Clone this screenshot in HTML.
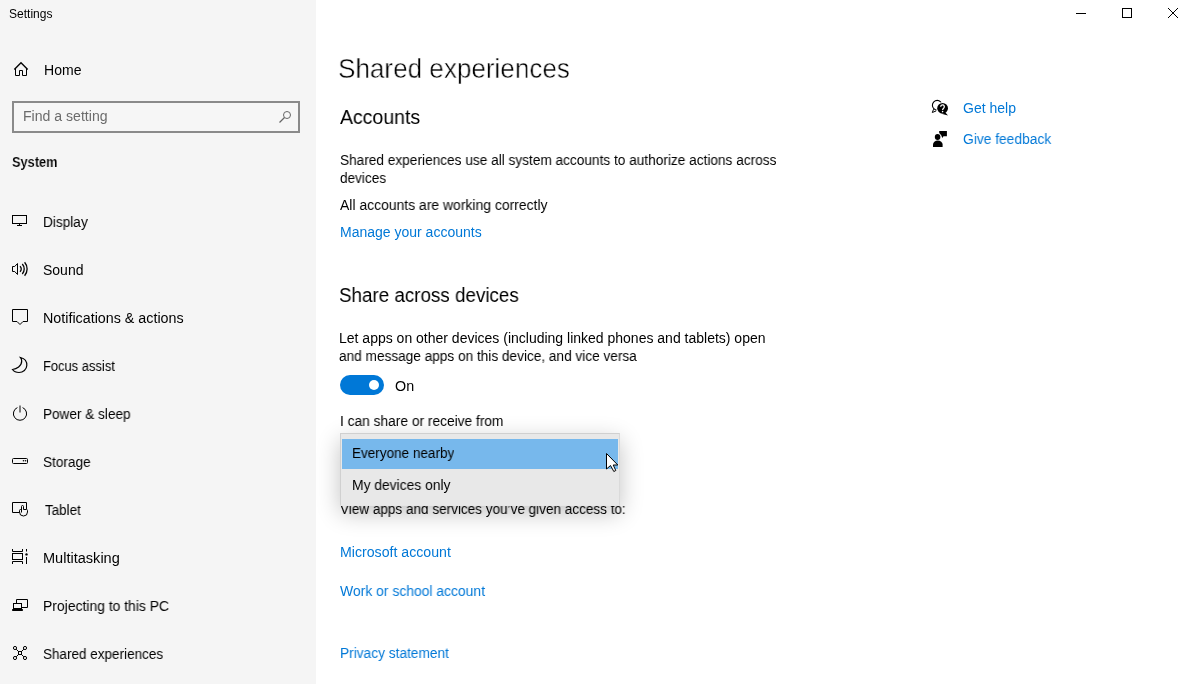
<!DOCTYPE html>
<html>
<head>
<meta charset="utf-8">
<style>
html,body{margin:0;padding:0;}
body{width:1187px;height:684px;overflow:hidden;position:relative;background:#fff;font-family:"Liberation Sans",sans-serif;}
.t{position:absolute;white-space:pre;will-change:transform;}
#side{position:absolute;left:0;top:0;width:316px;height:684px;background:#f5f5f5;}
#search{position:absolute;left:12px;top:101px;width:284px;height:28px;border:2px solid #8a8a8a;background:#f6f6f6;}
#toggle{position:absolute;left:340px;top:375px;width:44px;height:20px;border-radius:10px;background:#0078d7;}
#knob{position:absolute;left:29px;top:5px;width:10px;height:10px;border-radius:5px;background:#fff;}
#popup{position:absolute;left:340px;top:433px;width:278px;height:71px;border:1px solid #d0d0d0;border-bottom-color:#e6e6e6;border-right-color:#dadada;background:#e8e8e8;box-shadow:0 7px 22px rgba(0,0,0,0.24);}
#hl{position:absolute;left:342px;top:439px;width:276px;height:30px;background:#77b8ec;}
svg{position:absolute;left:0;top:0;}
</style>
</head>
<body>
<div id="side"></div>
<div id="search"></div>
<div class="t" style="left:9.10px;top:5px;font-size:12px;line-height:18px;font-weight:400;color:#000;transform:scaleX(1.0024);transform-origin:0 0;">Settings</div>
<div class="t" style="left:43.70px;top:60px;font-size:14px;line-height:20px;font-weight:400;color:#000;transform:scaleX(1.0028);transform-origin:0 0;">Home</div>
<div class="t" style="left:23.29px;top:106px;font-size:14px;line-height:20px;font-weight:400;color:#6b6b6b;transform:scaleX(1.0061);transform-origin:0 0;">Find a setting</div>
<div class="t" style="left:11.69px;top:152px;font-size:14px;line-height:20px;font-weight:700;color:#000;transform:scaleX(0.9146);transform-origin:0 0;-webkit-text-stroke:0.12px #f5f5f5;">System</div>
<div class="t" style="left:42.93px;top:212px;font-size:14px;line-height:20px;font-weight:400;color:#000;transform:scaleX(0.9733);transform-origin:0 0;">Display</div>
<div class="t" style="left:42.91px;top:260px;font-size:14px;line-height:20px;font-weight:400;color:#000;transform:scaleX(0.9949);transform-origin:0 0;">Sound</div>
<div class="t" style="left:42.88px;top:308px;font-size:14px;line-height:20px;font-weight:400;color:#000;transform:scaleX(1.0213);transform-origin:0 0;">Notifications &amp; actions</div>
<div class="t" style="left:42.98px;top:356px;font-size:14px;line-height:20px;font-weight:400;color:#000;transform:scaleX(0.9234);transform-origin:0 0;">Focus assist</div>
<div class="t" style="left:42.93px;top:404px;font-size:14px;line-height:20px;font-weight:400;color:#000;transform:scaleX(0.9697);transform-origin:0 0;">Power &amp; sleep</div>
<div class="t" style="left:42.93px;top:452px;font-size:14px;line-height:20px;font-weight:400;color:#000;transform:scaleX(0.9708);transform-origin:0 0;">Storage</div>
<div class="t" style="left:44.60px;top:500px;font-size:14px;line-height:20px;font-weight:400;color:#000;transform:scaleX(0.9568);transform-origin:0 0;">Tablet</div>
<div class="t" style="left:42.86px;top:548px;font-size:14px;line-height:20px;font-weight:400;color:#000;transform:scaleX(1.0389);transform-origin:0 0;">Multitasking</div>
<div class="t" style="left:42.91px;top:596px;font-size:14px;line-height:20px;font-weight:400;color:#000;transform:scaleX(0.9936);transform-origin:0 0;">Projecting to this PC</div>
<div class="t" style="left:42.94px;top:644px;font-size:14px;line-height:20px;font-weight:400;color:#000;transform:scaleX(0.9642);transform-origin:0 0;">Shared experiences</div>
<div class="t" style="left:337.67px;top:52px;font-size:28px;line-height:34px;font-weight:400;color:#000;transform:scaleX(0.9312);transform-origin:0 0;-webkit-text-stroke:0.5px #fff;">Shared experiences</div>
<div class="t" style="left:340.20px;top:104px;font-size:20px;line-height:26px;font-weight:400;color:#000;transform:scaleX(0.9744);transform-origin:0 0;">Accounts</div>
<div class="t" style="left:339.52px;top:150px;font-size:14px;line-height:20px;font-weight:400;color:#000;transform:scaleX(0.9753);transform-origin:0 0;">Shared experiences use all system accounts to authorize actions across</div>
<div class="t" style="left:339.53px;top:168px;font-size:14px;line-height:20px;font-weight:400;color:#000;transform:scaleX(0.9696);transform-origin:0 0;">devices</div>
<div class="t" style="left:340.00px;top:195px;font-size:14px;line-height:20px;font-weight:400;color:#000;transform:scaleX(0.9952);transform-origin:0 0;">All accounts are working correctly</div>
<div class="t" style="left:339.50px;top:222px;font-size:14px;line-height:20px;font-weight:400;color:#0078d7;transform:scaleX(1.0000);transform-origin:0 0;">Manage your accounts</div>
<div class="t" style="left:338.76px;top:282px;font-size:20px;line-height:26px;font-weight:400;color:#000;transform:scaleX(0.9400);transform-origin:0 0;">Share across devices</div>
<div class="t" style="left:339.30px;top:328px;font-size:14px;line-height:20px;font-weight:400;color:#000;transform:scaleX(1.0000);transform-origin:0 0;">Let apps on other devices (including linked phones and tablets) open</div>
<div class="t" style="left:339.33px;top:346px;font-size:14px;line-height:20px;font-weight:400;color:#000;transform:scaleX(0.9738);transform-origin:0 0;">and message apps on this device, and vice versa</div>
<div class="t" style="left:395.38px;top:376px;font-size:14px;line-height:20px;font-weight:400;color:#000;transform:scaleX(1.0235);transform-origin:0 0;">On</div>
<div class="t" style="left:339.52px;top:411px;font-size:14px;line-height:20px;font-weight:400;color:#000;transform:scaleX(0.9818);transform-origin:0 0;">I can share or receive from</div>
<div class="t" style="left:339.80px;top:499px;font-size:14px;line-height:20px;font-weight:400;color:#000;transform:scaleX(0.9670);transform-origin:0 0;">View apps and services you’ve given access to:</div>
<div class="t" style="left:339.69px;top:542px;font-size:14px;line-height:20px;font-weight:400;color:#0078d7;transform:scaleX(1.0110);transform-origin:0 0;">Microsoft account</div>
<div class="t" style="left:340.20px;top:581px;font-size:14px;line-height:20px;font-weight:400;color:#0078d7;transform:scaleX(0.9932);transform-origin:0 0;">Work or school account</div>
<div class="t" style="left:339.72px;top:643px;font-size:14px;line-height:20px;font-weight:400;color:#0078d7;transform:scaleX(0.9791);transform-origin:0 0;">Privacy statement</div>
<div class="t" style="left:963.31px;top:98px;font-size:14px;line-height:20px;font-weight:400;color:#0078d7;transform:scaleX(0.9942);transform-origin:0 0;">Get help</div>
<div class="t" style="left:963.31px;top:129px;font-size:14px;line-height:20px;font-weight:400;color:#0078d7;transform:scaleX(0.9852);transform-origin:0 0;">Give feedback</div>
<div id="toggle"><div id="knob"></div></div>
<svg width="1187" height="684" viewBox="0 0 1187 684" fill="none" stroke="#000" stroke-width="1">
<!-- window controls -->
<path d="M1076,13.5H1086"/>
<rect x="1122.5" y="8.5" width="9" height="9"/>
<path d="M1168,8L1178,18M1178,8L1168,18"/>
<!-- search magnifier -->
<g stroke="#666">
<circle cx="287" cy="115" r="3.5"/>
<path d="M284.5,117.5L279.5,122.5" stroke-width="1.2"/>
</g>
<!-- home -->
<path d="M14.3,69.5L21,62.8L27.7,69.5" stroke-width="1.35"/>
<path d="M15.5,68V75.5H19.5V70.5H22.5V75.5H26.5V68"/>
<!-- display -->
<rect x="12.5" y="215.5" width="14" height="8"/>
<path d="M19.5,224V225.5M17,225.5H22"/>
<!-- sound -->
<path d="M12.5,266.5H14.7L17.5,263.5V274.5L14.7,271.5H12.5Z"/>
<path d="M20,266.2A3.75,3.75 0 0 1 20,271.8" stroke-width="1.3"/>
<path d="M22.3,264A7.5,7.5 0 0 1 22.3,274" stroke-width="1.3"/>
<path d="M24.6,262.3A10.2,10.2 0 0 1 24.6,275.7" stroke-width="1.3"/>
<!-- notifications -->
<path d="M12.5,309.5H27.5V321.5H23L20,324.5L17,321.5H12.5Z"/>
<!-- focus moon -->
<path d="M20.5,357.5C24.5,358.5 27,361.5 26.8,365.5C26.6,369.5 23.2,372.5 19,372.5C16.3,372.5 13.8,371.3 12.5,369.5C16.5,369 21.8,366 21.7,361C21.7,359.5 21.2,358.3 20.5,357.5Z" stroke-width="1.2"/>
<!-- power -->
<path d="M17.4,407.6A6.6,6.6 0 1 0 22.6,407.6"/>
<path d="M20,405.5V412.5"/>
<!-- storage -->
<rect x="12.5" y="458.5" width="15" height="5" rx="1"/>
<g fill="#000" stroke="none"><circle cx="23.5" cy="460.8" r="0.8"/><circle cx="25.6" cy="460.8" r="0.8"/></g>
<!-- tablet -->
<path d="M26.5,509V502.5H12.5V512.5H19.5"/>
<path d="M21.5,512.5V506.5A1,1 0 0 1 23.5,506.5V509.5H26.5A1,1 0 0 1 27.5,510.5V512A4,4 0 0 1 19.5,512V510.5A1,1 0 0 1 21.5,510.5"/>
<!-- multitasking -->
<path d="M12.5,549V551.5H22.5V549"/>
<rect x="12.5" y="553.5" width="10" height="6"/>
<path d="M12.5,564V561.5H22.5V564"/>
<path d="M26.5,549V551.5M26.5,557V564"/>
<circle cx="26.5" cy="554.4" r="1.2" fill="#000" stroke="none"/>
<!-- projecting -->
<path d="M16.5,603V599.5H27.5V607.5H21.5"/>
<rect x="13.5" y="603.5" width="8" height="5"/>
<rect x="12" y="609" width="11" height="2" rx="0.8" fill="#000" stroke="none"/>
<!-- shared -->
<circle cx="15" cy="648" r="1.6"/>
<circle cx="25" cy="648" r="1.6"/>
<circle cx="15" cy="658" r="1.6"/>
<circle cx="25" cy="658" r="1.6"/>
<rect x="18.5" y="651.5" width="3" height="3"/>
<path d="M16.2,649.2L18.5,651.5M23.8,649.2L21.5,651.5M16.2,656.8L18.5,654.5M23.8,656.8L21.5,654.5"/>
<!-- get help -->
<circle cx="937.2" cy="105.2" r="4.8" stroke-width="1.1"/>
<path d="M933.6,109.2L932.3,112.5L936.2,110.9" stroke-width="1"/>
<circle cx="942.6" cy="108.3" r="6.4" fill="#fff" stroke="none"/>
<circle cx="942.6" cy="108.3" r="5.4" fill="#000" stroke="none"/>
<path d="M945.2,112.2L948,115.6L942.4,113.9Z" fill="#000" stroke="none"/>
<path d="M940.7,106.8A1.8,1.8 0 1 1 943.8,107.9C943,108.5 942.6,108.9 942.6,110" stroke="#fff" stroke-width="1.3"/>
<circle cx="942.6" cy="111.6" r="0.8" fill="#fff" stroke="none"/>
<!-- feedback -->
<g fill="#000" stroke="none">
<ellipse cx="937.6" cy="137" rx="2.8" ry="3"/>
<path d="M933,146.9V144.5A4.8,4 0 0 1 942.6,144.5V146.9Z"/>
<path d="M939.2,131H946.9V136.3H943.5L942.3,137.9L941.2,135.2L939.2,133Z"/>
</g>
</svg>
<div id="popup"></div>
<div id="hl"></div>
<div class="t" style="left:351.73px;top:443px;font-size:14px;line-height:20px;font-weight:400;color:#000;transform:scaleX(0.9667);transform-origin:0 0;">Everyone nearby</div>
<div class="t" style="left:351.71px;top:475px;font-size:14px;line-height:20px;font-weight:400;color:#000;transform:scaleX(0.9889);transform-origin:0 0;">My devices only</div>
<svg width="1187" height="684" viewBox="0 0 1187 684">
<path d="M606.5,453.5V469L610.5,465.5L613.8,471.5L615.8,470.5L613.2,465H617.8Z" fill="#fff" stroke="#000" stroke-width="1" stroke-linejoin="miter"/>
</svg>
</body>
</html>
